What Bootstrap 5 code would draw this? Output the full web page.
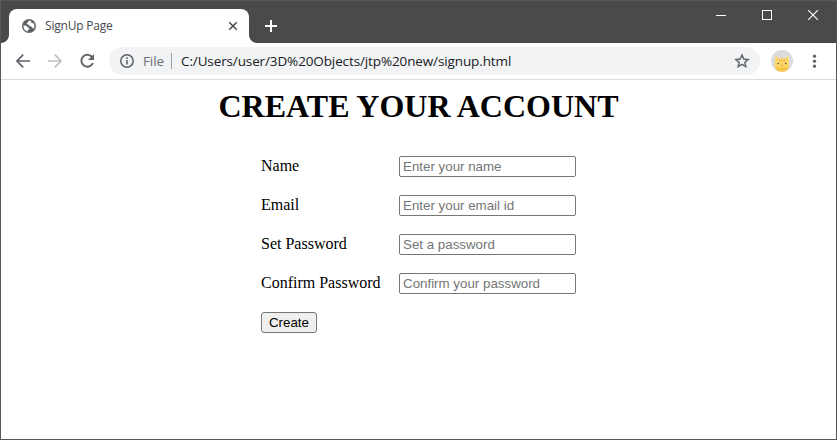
<!DOCTYPE html>
<html lang="en">
<head>
<meta charset="utf-8">
<meta name="viewport" content="width=device-width, initial-scale=1">
<title>SignUp Page</title>
<link href="https://cdn.jsdelivr.net/npm/bootstrap@5.3.0/dist/css/bootstrap.min.css" rel="stylesheet">
<style>
  body { font-family: "Open Sans", "Noto Sans", sans-serif; }
  svg { display: block; flex: none; }
  .browser { border: 1px solid #5a5958; color: #000; }
  .titlebar { height: 42px; background: #4c4a48; padding-left: 8px; }
  .tab { width: 240px; height: 34px; border-radius: 8px 8px 0 0; padding: 0 9px 0 13px; }
  .tab::before, .tab::after { content: ""; position: absolute; bottom: 0; width: 8px; height: 8px; }
  .tab::before { left: -8px; background: radial-gradient(circle at 0 0, transparent 7.5px, #fff 8.3px); }
  .tab::after { right: -8px; background: radial-gradient(circle at 100% 0, transparent 7.5px, #fff 8.3px); }
  .tab-title { font-size: 12px; line-height: 16px; letter-spacing: -.2px; color: #45494d; margin-left: 9px; }
  .newtab { margin: 10px 0 0 15px; }
  .controls { gap: 36px; margin: 9px 18px 0 0; }
  .toolbar { height: 37px; border-bottom: 1px solid #dadce0; padding: 0 14px 0 14px; }
  .navicons { gap: 16px; width: 94px; }
  .address { width: 651px; height: 28px; background: #f1f3f4; padding: 0 10px; font-size: 13.5px; line-height: 20px; }
  .scheme { color: #6b7074; margin-left: 8px; width: 21px; letter-spacing: -.1px; }
  .divider { width: 1px; height: 16px; background: #9a9da0; margin: 0 9px 0 7px; }
  .url { color: #202124; letter-spacing: -.12px; }
  .avatar { margin-left: 11px; }
  .viewport { font-family: "Liberation Serif", serif; }
  .heading { font-size: 32px; line-height: 37px; font-weight: 700; margin: 8px 0 31px; }
  .signup { width: 315px; display: grid; row-gap: 18px; }
  .field { grid-template-columns: 138px 177px; height: 21px; }
  .field label { font-size: 16px; line-height: 20px; }
  .entry, .create { font-family: "Liberation Sans", sans-serif; font-size: 13.333px; line-height: 15px; height: 21px; border: 1px solid #767676; }
  .entry { width: 177px; padding: 1px 3px; border-radius: 2px; background: #fff; }
  .entry::placeholder { color: #757575; opacity: 1; }
  .create { width: 56px; padding: 0; border-radius: 3px; background: #efefef; color: #000; }
</style>
</head>
<body>
<div class="browser d-flex flex-column vh-100 bg-white overflow-hidden">
  <header class="titlebar d-flex flex-shrink-0">
    <div class="tab position-relative d-flex align-items-center bg-white align-self-end">
      <svg width="14" height="14" viewBox="0 0 14 14"><circle cx="7" cy="7" r="7" fill="#5f6368"/><path d="M7.3 1.5C6 2 6.500 3.500 5.400 3.800 4.300 4 4.600 5.300 5.700 5.400c1.600.2 1.900.7 1.900 1.800 0 .8 1.700.3 2.300.9.800.8.500 1.500 2 1.500.8-1.900.7-4.200-.6-5.900-.9.900-2 .6-2-.4 0-.7-.2-1.500-2-1.800zM1.500 6.400c1.500.1 3.700.1 3.900 1.500.2 1.100 2.100.6 2.100 1.700 0 1-1.800.7-1.800 2.800C3 11.900 1.300 9.500 1.500 6.400z" fill="#fff"/></svg>
      <span class="tab-title text-nowrap">SignUp Page</span>
      <svg class="ms-auto" width="14" height="14" viewBox="0 0 14 14"><path d="M3.200 3.200l7.600 7.600M10.800 3.200l-7.600 7.600" stroke="#45494d" stroke-width="1.500"/></svg>
    </div>
    <svg class="newtab" width="14" height="30" viewBox="0 0 14 30"><path d="M7 9v12M1 15h12" stroke="#fff" stroke-width="2"/></svg>
    <div class="controls d-flex ms-auto">
      <svg width="10" height="10"><path d="M0 5.500h10" stroke="#fff"/></svg>
      <svg width="10" height="10"><rect x=".5" y=".5" width="9" height="9" fill="none" stroke="#fff"/></svg>
      <svg width="10" height="10"><path d="M0 0l10 10M10 0L0 10" stroke="#fff" stroke-width="1.100"/></svg>
    </div>
  </header>
  <div class="toolbar d-flex align-items-center flex-shrink-0">
    <div class="navicons d-flex align-items-center">
      <svg width="16" height="16" viewBox="0 0 16 16"><path d="M15 8H2.500M8.200 1.700L2 8l6.200 6.300" fill="none" stroke="#5f6368" stroke-width="1.700"/></svg>
      <svg width="16" height="16" viewBox="0 0 16 16"><path d="M1 8h12.500M7.800 1.700L14 8l-6.200 6.300" fill="none" stroke="#bdc0c2" stroke-width="1.700"/></svg>
      <svg width="16" height="16" viewBox="0 0 16 16"><path d="M13.700 5A6 6 0 1 0 13.900 10" fill="none" stroke="#5f6368" stroke-width="1.900"/><path d="M15 1v6H9z" fill="#5f6368"/></svg>
    </div>
    <div class="address d-flex align-items-center rounded-pill">
      <svg width="16" height="16" viewBox="0 0 16 16"><circle cx="8" cy="8" r="6.200" fill="none" stroke="#5f6368" stroke-width="1.500"/><path d="M8 4.300v1.600M8 7.100v4.500" stroke="#5f6368" stroke-width="1.600"/></svg>
      <span class="scheme">File</span>
      <span class="divider"></span>
      <span class="url text-nowrap">C:/Users/user/3D%20Objects/jtp%20new/signup.html</span>
      <svg class="ms-auto" width="16" height="16" viewBox="0 0 16 16"><path d="M8 2l1.750 4.050 4.400.400-3.330 2.900 1 4.300L8 11.350 4.180 13.650l1-4.300-3.330-2.900 4.400-.4z" fill="none" stroke="#5f6368" stroke-width="1.400"/></svg>
    </div>
    <svg class="avatar" width="22" height="22" viewBox="0 0 22 22"><circle cx="11" cy="11" r="11" fill="#dcdcdc"/><path d="M5 6l3.300 2.700q2.700-.7 5.400 0L17 6q1.200 3 1 6.500.8 6.500-3 8.500-4 1.400-8 0-3.800-2-3-8.500Q3.800 9 5 6z" fill="#fcd667"/><path d="M4.300 16q2.700 3 6.700 1 4 2 6.700-1-.4 4-3.200 5-3.500 1.200-7 0-2.800-1-3.200-5z" fill="#f8c548"/><path d="M8.200 9.300l.8 2M11 8.800v2.500M13.800 9.300l-.8 2" stroke="#eda638"/><circle cx="7.300" cy="13.500" r=".8" fill="#514a40"/><circle cx="14.700" cy="13.500" r=".8" fill="#514a40"/><path d="M10 15h2l-1 1z" fill="#c56b42"/></svg>
    <svg class="ms-auto" width="16" height="16" viewBox="0 0 16 16"><g fill="#5f6368"><circle cx="8.500" cy="3.200" r="1.600"/><circle cx="8.500" cy="8.200" r="1.600"/><circle cx="8.500" cy="13.200" r="1.600"/></g></svg>
  </div>
  <main class="viewport flex-grow-1">
    <h1 class="heading text-center">CREATE YOUR ACCOUNT</h1>
    <form class="signup mx-auto">
      <div class="field d-grid"><label for="name">Name</label><input class="entry" id="name" type="text" placeholder="Enter your name"></div>
      <div class="field d-grid"><label for="email">Email</label><input class="entry" id="email" type="text" placeholder="Enter your email id"></div>
      <div class="field d-grid"><label for="password">Set Password</label><input class="entry" id="password" type="password" placeholder="Set a password"></div>
      <div class="field d-grid"><label for="confirm">Confirm Password</label><input class="entry" id="confirm" type="password" placeholder="Confirm your password"></div>
      <button class="create" type="button">Create</button>
    </form>
  </main>
</div>
<script src="https://cdn.jsdelivr.net/npm/bootstrap@5.3.0/dist/js/bootstrap.bundle.min.js"></script>
</body>
</html>
